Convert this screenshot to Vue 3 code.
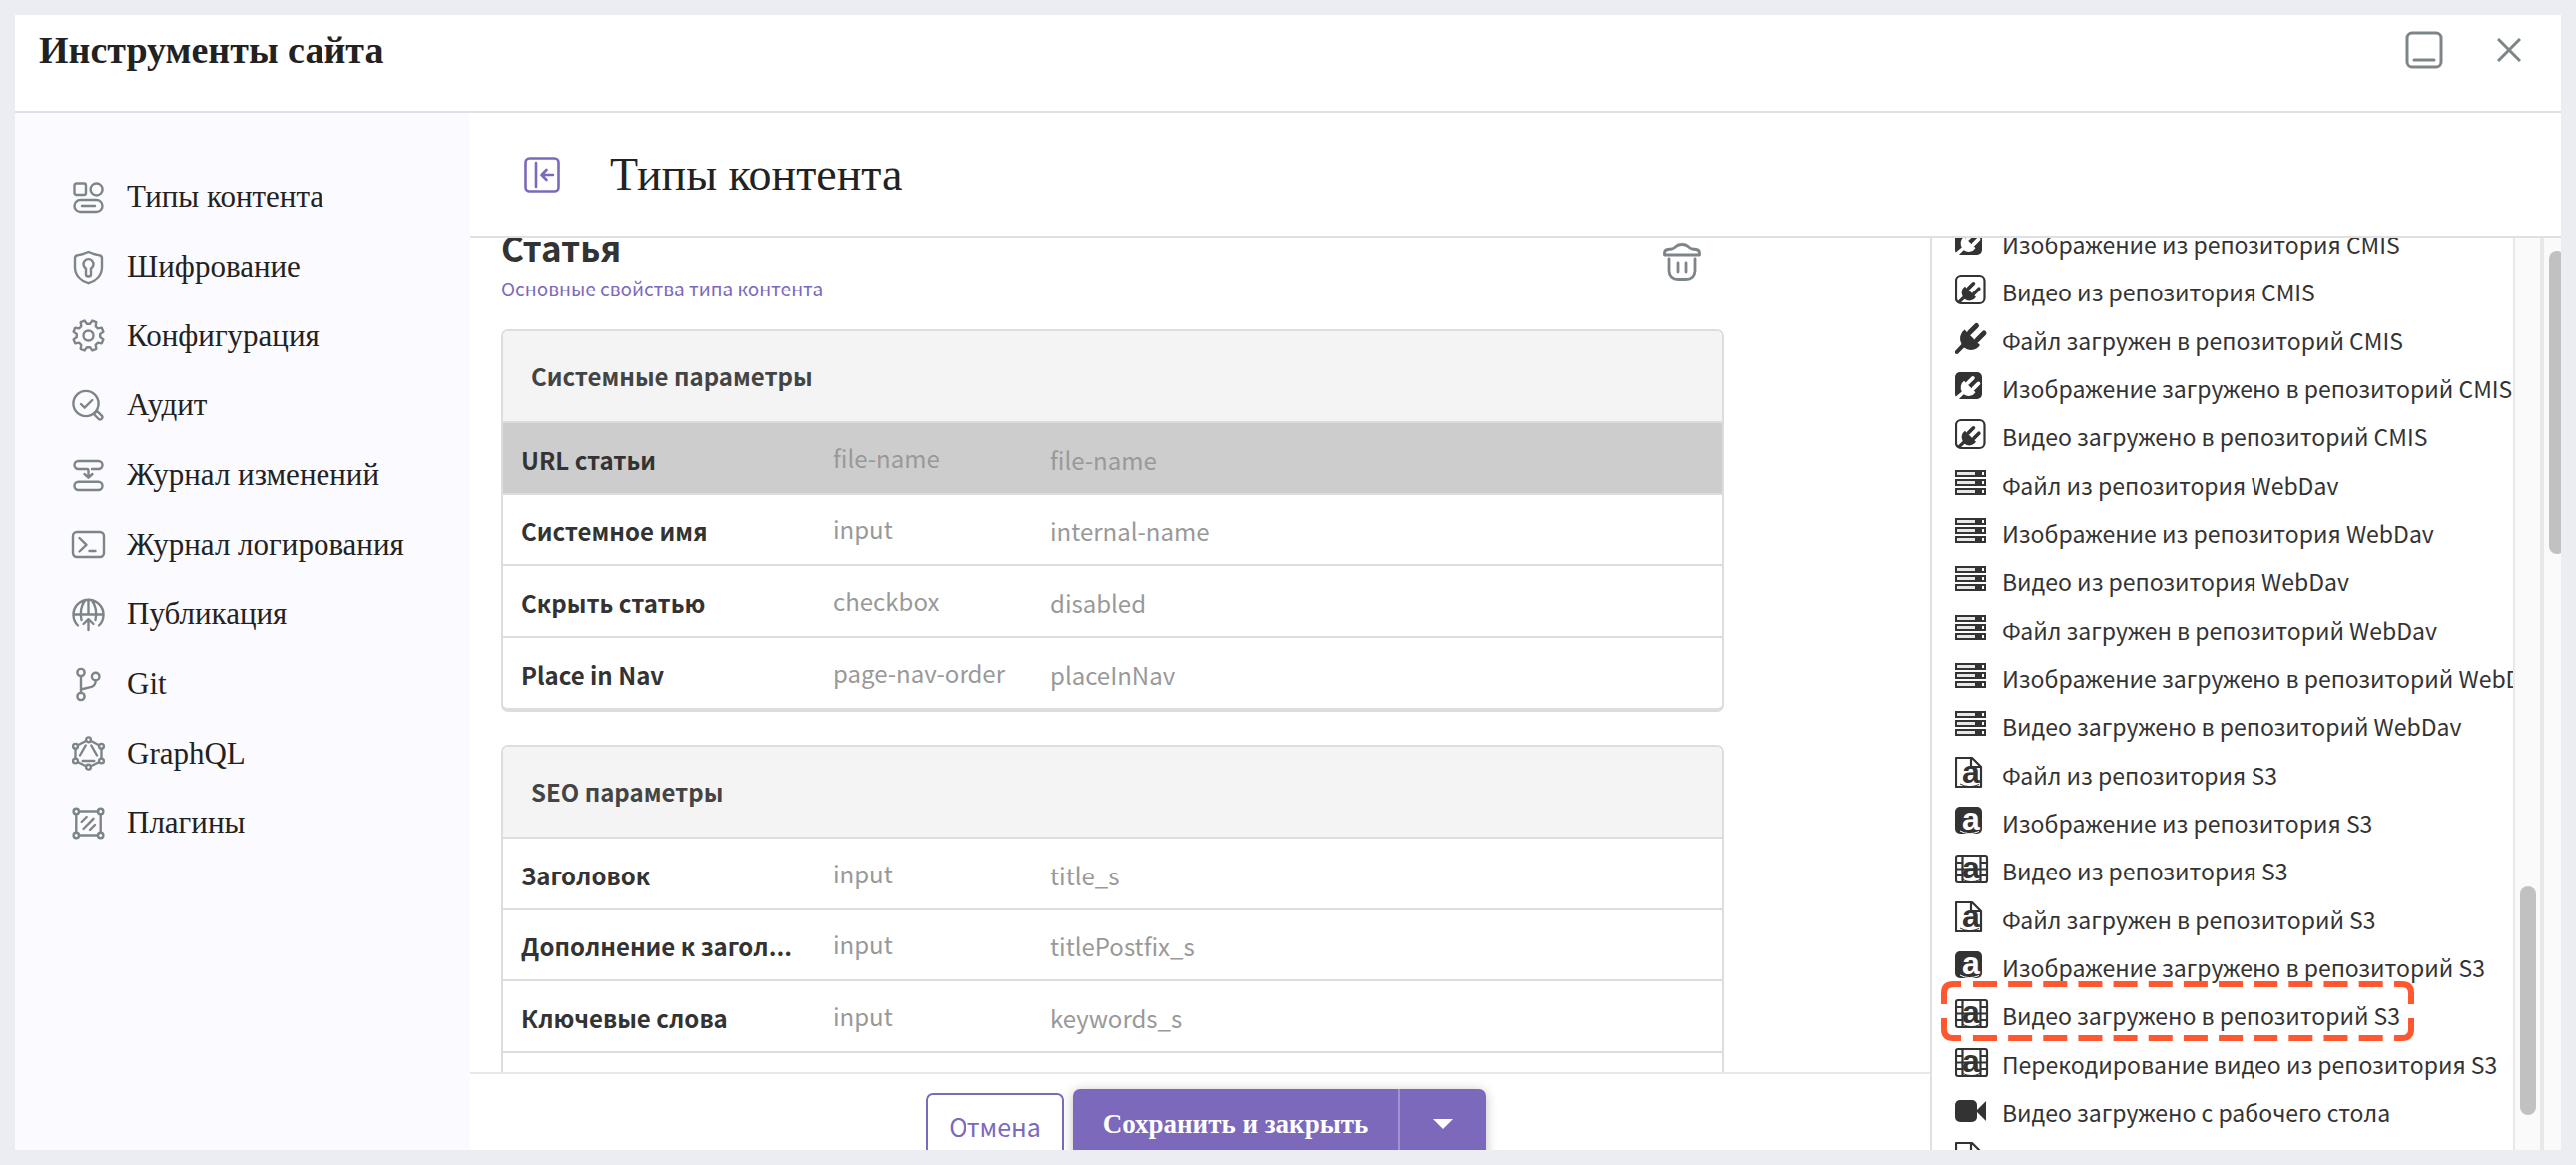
<script setup>
import { computed } from 'vue'

const tools = [
  { id: 'types', label: 'Типы контента' },
  { id: 'encrypt', label: 'Шифрование' },
  { id: 'config', label: 'Конфигурация' },
  { id: 'audit', label: 'Аудит' },
  { id: 'changes', label: 'Журнал изменений' },
  { id: 'logs', label: 'Журнал логирования' },
  { id: 'publish', label: 'Публикация' },
  { id: 'git', label: 'Git' },
  { id: 'graphql', label: 'GraphQL' },
  { id: 'plugins', label: 'Плагины' },
]

const groups = [
  {
    title: 'Системные параметры',
    rows: [
      { name: 'URL статьи', type: 'file-name', id: 'file-name', selected: true },
      { name: 'Системное имя', type: 'input', id: 'internal-name' },
      { name: 'Скрыть статью', type: 'checkbox', id: 'disabled' },
      { name: 'Place in Nav', type: 'page-nav-order', id: 'placeInNav' },
    ],
  },
  {
    title: 'SEO параметры',
    rows: [
      { name: 'Заголовок', type: 'input', id: 'title_s' },
      { name: 'Дополнение к загол...', type: 'input', id: 'titlePostfix_s' },
      { name: 'Ключевые слова', type: 'input', id: 'keywords_s' },
      { name: '', type: '', id: '' },
    ],
  },
]

const sources = [
  { icon: 'plug-image', label: 'Изображение из репозитория CMIS' },
  { icon: 'plug-video', label: 'Видео из репозитория CMIS' },
  { icon: 'plug', label: 'Файл загружен в репозиторий CMIS' },
  { icon: 'plug-image', label: 'Изображение загружено в репозиторий CMIS' },
  { icon: 'plug-video', label: 'Видео загружено в репозиторий CMIS' },
  { icon: 'server', label: 'Файл из репозитория WebDav' },
  { icon: 'server', label: 'Изображение из репозитория WebDav' },
  { icon: 'server', label: 'Видео из репозитория WebDav' },
  { icon: 'server', label: 'Файл загружен в репозиторий WebDav' },
  { icon: 'server', label: 'Изображение загружено в репозиторий WebDav' },
  { icon: 'server', label: 'Видео загружено в репозиторий WebDav' },
  { icon: 's3-file', label: 'Файл из репозитория S3' },
  { icon: 's3-image', label: 'Изображение из репозитория S3' },
  { icon: 's3-video', label: 'Видео из репозитория S3' },
  { icon: 's3-file', label: 'Файл загружен в репозиторий S3' },
  { icon: 's3-image', label: 'Изображение загружено в репозиторий S3' },
  { icon: 's3-video', label: 'Видео загружено в репозиторий S3', marked: true },
  { icon: 's3-video', label: 'Перекодирование видео из репозитория S3' },
  { icon: 'camera', label: 'Видео загружено с рабочего стола' },
  { icon: 'file', label: '' },
]

const gearPath = computed(() => {
  const pts = []
  for (let k = 0; k < 8; k++) {
    const mid = 22.5 + 45 * k
    for (const [offset, radius] of [[-15, 11.8], [-8, 15.4], [8, 15.4], [15, 11.8]]) {
      const a = ((mid + offset) * Math.PI) / 180
      pts.push(`${(16.5 + radius * Math.cos(a)).toFixed(2)} ${(16.5 + radius * Math.sin(a)).toFixed(2)}`)
    }
  }
  return `M${pts.join('L')}Z`
})
</script>

<template>
  <div class="backdrop">
    <div class="dialog">
      <header class="titlebar">
        <h1>Инструменты сайта</h1>
        <div class="window-actions">
          <button type="button" aria-label="Свернуть">
            <svg width="38" height="38" viewBox="0 0 38 38" fill="none" stroke="currentColor" stroke-width="3">
              <rect x="2" y="2" width="34" height="34" rx="5" />
              <path d="M9 29H29" stroke-linecap="round" />
            </svg>
          </button>
          <button type="button" aria-label="Закрыть">
            <svg width="24" height="24" viewBox="0 0 24 24" fill="none" stroke="currentColor" stroke-width="3">
              <path d="M1 1 23 23M23 1 1 23" />
            </svg>
          </button>
        </div>
      </header>

      <div class="body">
        <nav class="sidebar" aria-label="Инструменты">
          <a v-for="tool in tools" :key="tool.id" href="#" class="tool">
            <svg class="tool-icon" viewBox="0 0 33 33" aria-hidden="true">
              <g v-if="tool.id === 'types'">
                <rect x="2.5" y="2.5" width="11.5" height="11.5" rx="2" />
                <circle cx="24.6" cy="8.5" r="6" />
                <rect x="2.5" y="19" width="28" height="12" rx="6" />
                <path d="M10 25H23" />
              </g>
              <g v-else-if="tool.id === 'encrypt'">
                <path d="M16.5 1C12 3.2 7.5 4 5 4.5Q3 5 3 7.5V16C3 24.5 9 30 16.5 32.2C24 30 30 24.5 30 16V7.5Q30 5 28 4.5C25.5 4 21 3.2 16.5 1Z" />
                <path d="M14 17.5A5 5 0 1 1 19 17.5V23.5Q19 25.5 16.5 25.5Q14 25.5 14 23.5Z" />
              </g>
              <g v-else-if="tool.id === 'config'">
                <path :d="gearPath" />
                <circle cx="16.5" cy="16.5" r="5" />
              </g>
              <g v-else-if="tool.id === 'audit'">
                <circle cx="14" cy="14.5" r="12.6" />
                <path d="M9 15 12.7 18.7 20.3 11" />
                <path d="M21.8 25 25 21.8 30 26.8A2.3 2.3 0 0 1 26.8 30Z" />
              </g>
              <g v-else-if="tool.id === 'changes'">
                <path d="M15.5 10H6.5A4 4 0 0 1 6.5 2H26.5A4 4 0 0 1 26.5 10H20M15.5 10Q16.5 10 16.5 12V18M12.5 15 16.5 18.7 20.5 15" />
                <rect x="2.5" y="22.7" width="28" height="8.3" rx="4" />
              </g>
              <g v-else-if="tool.id === 'logs'">
                <rect x="1" y="4" width="31" height="25" rx="4" />
                <path d="M7.5 10 14.5 16.8 7.5 23.5M17.5 23H23.5" />
              </g>
              <g v-else-if="tool.id === 'publish'">
                <path d="M6 27.5A15 15 0 1 1 27 27.5M1.5 16.5H31.5M16.5 1.5V16.5M13 2.5C9 8 8 15 9.5 22M20 2.5C24 8 25 15 23.5 22M16.5 32V21.5M11.5 26 16.5 21.2 21.5 26" />
              </g>
              <g v-else-if="tool.id === 'git'">
                <circle cx="9" cy="4.5" r="3.6" />
                <circle cx="9" cy="28.5" r="3.6" />
                <circle cx="23.7" cy="8.5" r="3.8" />
                <path d="M9 8V25M9 21.5 19.5 18.8Q23.7 17.5 23.7 12.4" />
              </g>
              <g v-else-if="tool.id === 'graphql'">
                <circle cx="16.5" cy="2.8" r="2.4" />
                <circle cx="16.5" cy="30.2" r="2.4" />
                <circle cx="3.5" cy="9.3" r="2.4" />
                <circle cx="29.5" cy="9.3" r="2.4" />
                <circle cx="3.5" cy="24" r="2.4" />
                <circle cx="29.5" cy="24" r="2.4" />
                <path d="M14 4 6 8.2M19 4 27 8.2M3.5 12V21.5M29.5 12V21.5M6 25.2 14 29.2M27 25.2 19 29.2M8 18.5 13.7 8.5M19.3 8.5 25 18.5M10.7 24H22.3" />
              </g>
              <g v-else>
                <circle cx="4.3" cy="4.5" r="2.7" />
                <circle cx="28.7" cy="4.5" r="2.7" />
                <circle cx="4.3" cy="28.5" r="2.7" />
                <circle cx="28.7" cy="28.5" r="2.7" />
                <path d="M7 4.5H26M7 28.5H26M4.3 7.2V25.8M28.7 7.2V25.8M9.7 15 14.7 10M11.5 22 21.5 11.8M18 23 23 18" />
              </g>
            </svg>
            <span>{{ tool.label }}</span>
          </a>
        </nav>

        <main class="main">
          <header class="section-head">
            <button type="button" class="collapse" aria-label="Свернуть меню">
              <svg width="36" height="36" viewBox="0 0 36 36" fill="none" stroke="currentColor" stroke-width="2.6" stroke-linecap="round" stroke-linejoin="round">
                <rect x="1.5" y="1.5" width="33" height="33" rx="4" />
                <path d="M12 6V30M29 18H18M22.5 13 17.5 18 22.5 23" />
              </svg>
            </button>
            <h2>Типы контента</h2>
          </header>

          <div class="panes">
            <section class="editor">
              <div class="fields">
                <div class="type-head">
                  <div>
                    <h3 class="type-name">Статья</h3>
                    <a href="#" class="type-link">Основные свойства типа контента</a>
                  </div>
                  <button type="button" class="trash" aria-label="Удалить">
                    <svg width="38" height="38" viewBox="0 0 38 38" fill="none" stroke="currentColor" stroke-width="2.8" stroke-linecap="round" stroke-linejoin="round">
                      <path d="M1.5 12V10Q1.5 7 5 6.5L9 6Q11 5.5 13 3.5Q15 1.5 19 1.5Q23 1.5 25 3.5Q27 5.5 29 6L33 6.5Q36.5 7 36.5 10V12Z" />
                      <path d="M6 16V28Q6.5 36.5 15 36.5H23Q31.5 36.5 32 28V16M15 20V29M23 20V29" />
                    </svg>
                  </button>
                </div>

                <section v-for="group in groups" :key="group.title" class="card">
                  <h4 class="card-title">{{ group.title }}</h4>
                  <table>
                    <colgroup>
                      <col class="col-name" />
                      <col class="col-type" />
                      <col />
                    </colgroup>
                    <tbody>
                      <tr v-for="(row, i) in group.rows" :key="i" :class="{ selected: row.selected }">
                        <th scope="row">{{ row.name }}</th>
                        <td class="type">{{ row.type }}</td>
                        <td>{{ row.id }}</td>
                      </tr>
                    </tbody>
                  </table>
                </section>
              </div>

              <footer class="actions">
                <button type="button" class="cancel">Отмена</button>
                <div class="save-group">
                  <button type="button" class="save">Сохранить и закрыть</button>
                  <button type="button" class="more" aria-label="Другие действия">
                    <svg width="20" height="10" viewBox="0 0 20 10"><path d="M0 0H20L10 10Z" fill="currentColor" /></svg>
                  </button>
                </div>
              </footer>
            </section>

            <aside class="palette">
              <ul>
                <li v-for="(source, i) in sources" :key="i">
                  <svg class="source-icon" viewBox="0 0 34 34" aria-hidden="true">
                    <g v-if="source.icon === 'plug'" transform="translate(0 2)">
                      <path d="M9.5 6.5 25 22A11 11 0 0 1 9 24.5L2.5 31 0 30.5V28L6.5 21A11 11 0 0 1 9.5 6.5Z" />
                      <path class="prong" d="M14.5 9.5 21.5 2.5M22 17 29 10" />
                    </g>
                    <g v-else-if="source.icon === 'plug-image'">
                      <rect y="3" width="27" height="27" rx="5" />
                      <g class="cut" transform="translate(2 7) scale(.74)">
                        <path d="M9.5 6.5 25 22A11 11 0 0 1 9 24.5L2.5 31-1 32-2 28 6.5 21A11 11 0 0 1 9.5 6.5Z" />
                        <path class="prong" d="M14.5 9.5 21.5 2.5M22 17 29 10" />
                      </g>
                    </g>
                    <g v-else-if="source.icon === 'plug-video'">
                      <rect class="line" x="1" y="3" width="28.5" height="28" rx="5" />
                      <g transform="translate(3 9) scale(.72)">
                        <path d="M9.5 6.5 25 22A11 11 0 0 1 9 24.5L2.5 31-1 30V28L6.5 21A11 11 0 0 1 9.5 6.5Z" />
                        <path class="prong" d="M14.5 9.5 21.5 2.5M22 17 29 10" />
                      </g>
                    </g>
                    <g v-else-if="source.icon === 'server'">
                      <g v-for="y in [4, 13, 22]" :key="y">
                        <rect :y="y" width="31" height="7" />
                        <rect class="slot" x="2" :y="y + 2" width="18" height="3" />
                        <rect class="lamp" x="27" :y="y + 2" width="2" height="3" />
                      </g>
                    </g>
                    <g v-else-if="source.icon === 's3-file'">
                      <path class="line" d="M1 2H17L26 11V31H1ZM16 2V11H26" />
                      <text x="7" y="27">a</text>
                      <path class="thin" d="M5 28Q14 33 24 28.5" />
                    </g>
                    <g v-else-if="source.icon === 's3-image'">
                      <rect y="3" width="27" height="27" rx="5" />
                      <text class="cut-text" x="7" y="26">a</text>
                      <path class="thin cut-line" d="M5 27Q14 32 24 27.5" />
                    </g>
                    <g v-else-if="source.icon === 's3-video'">
                      <rect class="line" x="1" y="4" width="31" height="27" rx="2" />
                      <path class="line" d="M7.5 4V31M25.5 4V31M1 11H7.5M1 17.5H32M1 24H7.5M25.5 11H32M25.5 24H32" />
                      <text x="7" y="27">a</text>
                      <path class="thin" d="M7 28Q16 33 25 28.5" />
                    </g>
                    <g v-else-if="source.icon === 'camera'">
                      <rect y="7" width="22" height="22" rx="5" />
                      <path d="M22 17 31 8V28L22 19Z" />
                    </g>
                    <path v-else class="line" d="M1 2H17L26 11V31H1ZM16 2V11H26" />
                  </svg>
                  <span>{{ source.label }}</span>
                  <svg v-if="source.marked" class="marker" width="474" height="60" viewBox="0 0 474 60" aria-hidden="true">
                    <path d="M3 23V12Q3 3 12 3H20M454 3H462Q471 3 471 12V23M3 37V48Q3 57 12 57H20M454 57H462Q471 57 471 48V37" />
                    <path d="M32 3H443M32 57H443" stroke-dasharray="24 11.15" />
                  </svg>
                </li>
              </ul>
            </aside>
            <div class="track inner"><div class="thumb"></div></div>
            <div class="track outer"><div class="thumb"></div></div>
          </div>
        </main>
      </div>
    </div>
  </div>
</template>

<style>
body {
  margin: 0;
  background: #ecedf2;
}
</style>

<style scoped>
.backdrop {
  --sans: "Noto Sans CJK SC", "Noto Sans", sans-serif;
  --serif: "Liberation Serif", serif;
  --violet: #7c69bc;
  --line: #e0e0e0;
  box-sizing: border-box;
  height: 100vh;
  padding: 15px;
  background: #ecedf2;
  color: #333;
  font-family: var(--sans);
}
.backdrop *,
.backdrop *::before {
  box-sizing: border-box;
}
h1, h2, h3, h4, ul {
  margin: 0;
  padding: 0;
}
button {
  padding: 0;
  border: 0;
  background: none;
  color: inherit;
}
button svg {
  display: block;
}
a {
  text-decoration: none;
}
.dialog {
  display: flex;
  flex-direction: column;
  height: 100%;
  overflow: hidden;
  background: #fff;
}
.titlebar {
  display: flex;
  justify-content: space-between;
  align-items: flex-start;
  flex: none;
  height: 98px;
  padding: 12px 40px 0 24px;
  border-bottom: 2px solid var(--line);
  color: #222;
  font-family: var(--serif);
}
.titlebar h1 {
  font-size: 38px;
  line-height: 46px;
}
.window-actions {
  display: flex;
  align-items: center;
  gap: 54px;
  height: 46px;
  color: #7d8588;
}
.body {
  display: flex;
  flex: 1;
  min-height: 0;
}
.sidebar {
  flex: none;
  width: 456px;
  padding: 49px 0 0 57px;
  background: #fbfaff;
  font-family: var(--serif);
}
.tool {
  display: flex;
  align-items: center;
  gap: 22px;
  height: 70px;
  color: #222;
  font-size: 31px;
  line-height: 36px;
}
.tool:nth-child(3n) {
  height: 69px;
}
.tool-icon {
  width: 33px;
  height: 33px;
  overflow: visible;
  fill: none;
  stroke: #7d8588;
  stroke-width: 2.4;
  stroke-linecap: round;
  stroke-linejoin: round;
}
.main {
  display: flex;
  flex-direction: column;
  flex: 1;
  min-width: 0;
}
.section-head {
  display: flex;
  align-items: center;
  gap: 50px;
  flex: none;
  height: 125px;
  padding-left: 54px;
  border-bottom: 2px solid var(--line);
}
.section-head h2 {
  color: #222;
  font: 46px/52px var(--serif);
}
.collapse {
  color: var(--violet);
}
.panes {
  display: flex;
  flex: 1;
  min-height: 0;
}
.editor {
  display: flex;
  flex-direction: column;
  flex: 1;
  min-width: 0;
}
.fields {
  flex: 1;
  min-height: 0;
  overflow: hidden;
  padding: 0 206px 0 31px;
}
.type-head {
  display: flex;
  justify-content: space-between;
  align-items: flex-start;
  height: 92px;
  padding-right: 23px;
}
.type-name {
  margin-top: -11px;
  font-size: 35px;
  line-height: 40px;
}
.type-link {
  display: block;
  margin-top: 10px;
  color: var(--violet);
  font-size: 19px;
  line-height: 24px;
}
.trash {
  margin-top: 5px;
  color: #7d8588;
}
.card {
  margin-bottom: 33px;
  overflow: hidden;
  border: 2px solid #ddd;
  border-bottom-width: 4px;
  border-radius: 7px;
}
.card-title {
  height: 92px;
  padding-left: 28px;
  border-bottom: 2px solid #ddd;
  background: #f4f4f4;
  color: #444;
  font-size: 24px;
  line-height: 90px;
}
table {
  width: 100%;
  border-spacing: 0;
  table-layout: fixed;
}
.col-name {
  width: 312px;
}
.col-type {
  width: 218px;
}
th,
td {
  height: 71px;
  padding: 3px 0 0 18px;
  border-bottom: 2px solid #ddd;
  font-size: 24px;
  line-height: 36px;
  text-align: left;
  white-space: nowrap;
}
tr:nth-child(odd) > * {
  height: 72px;
}
tr:last-child > * {
  height: 70px;
  border-bottom: 0;
}
td {
  color: #999;
}
td.type {
  padding: 0 0 1px 18px;
}
.selected > * {
  background: #cdcdcd;
}
.actions {
  display: flex;
  justify-content: center;
  align-items: flex-start;
  gap: 9px;
  flex: none;
  height: 78px;
  padding: 15px 0 0 11px;
  border-top: 2px solid #e8e8e8;
}
.cancel {
  width: 139px;
  height: 66px;
  margin-top: 4px;
  border: 2px solid var(--violet);
  border-radius: 7px;
  color: var(--violet);
  font: 25px/60px var(--sans);
}
.save-group {
  display: flex;
  height: 70px;
  border-radius: 7px;
  background: var(--violet);
  box-shadow: 0 2px 12px rgba(0, 0, 0, 0.25);
  color: #fff;
}
.save {
  width: 327px;
  border-right: 2px solid #a191d6;
  font: bold 27px/70px var(--serif);
}
.more {
  display: flex;
  justify-content: center;
  align-items: center;
  width: 86px;
}
.palette {
  flex: none;
  width: 584px;
  overflow: hidden;
  border-left: 2px solid var(--line);
}
.palette ul {
  margin-top: -18px;
  list-style: none;
}
.palette li {
  position: relative;
  display: flex;
  align-items: center;
  gap: 13px;
  height: 48px;
  padding-left: 23px;
  color: #333;
  font-size: 23px;
  line-height: 36px;
  white-space: nowrap;
}
.palette li:nth-child(3n) {
  height: 49px;
}
.source-icon {
  flex: none;
  width: 34px;
  height: 34px;
  margin-bottom: 4px;
  fill: #333;
}
.source-icon .line {
  fill: none;
  stroke: #333;
  stroke-width: 2.2;
  stroke-linejoin: round;
}
.source-icon .thin {
  fill: none;
  stroke: #333;
  stroke-width: 1;
}
.source-icon .prong {
  fill: none;
  stroke: #333;
  stroke-width: 5;
  stroke-linecap: round;
}
.source-icon text {
  font: bold 32px "Liberation Sans", sans-serif;
}
.source-icon .cut,
.source-icon .cut-text,
.source-icon .lamp {
  fill: #fff;
}
.source-icon .cut .prong,
.source-icon .cut-line {
  stroke: #fff;
}
.source-icon .slot {
  fill: #e4e8e6;
}
.marker {
  position: absolute;
  top: -10px;
  left: 9px;
  fill: none;
  stroke: #ff5730;
  stroke-width: 6;
}
.track {
  flex: none;
  background: #fafafa;
  border-left: 2px solid #e8e8e8;
}
.inner {
  width: 27px;
  padding: 650px 4px 0 5px;
}
.inner .thumb {
  height: 229px;
}
.outer {
  width: 21px;
  overflow: hidden;
  padding: 13px 0 0 5px;
  border-left-width: 4px;
}
.outer .thumb {
  height: 304px;
}
.thumb {
  width: 16px;
  border-radius: 8px;
  background: #c1c1c1;
}
</style>
